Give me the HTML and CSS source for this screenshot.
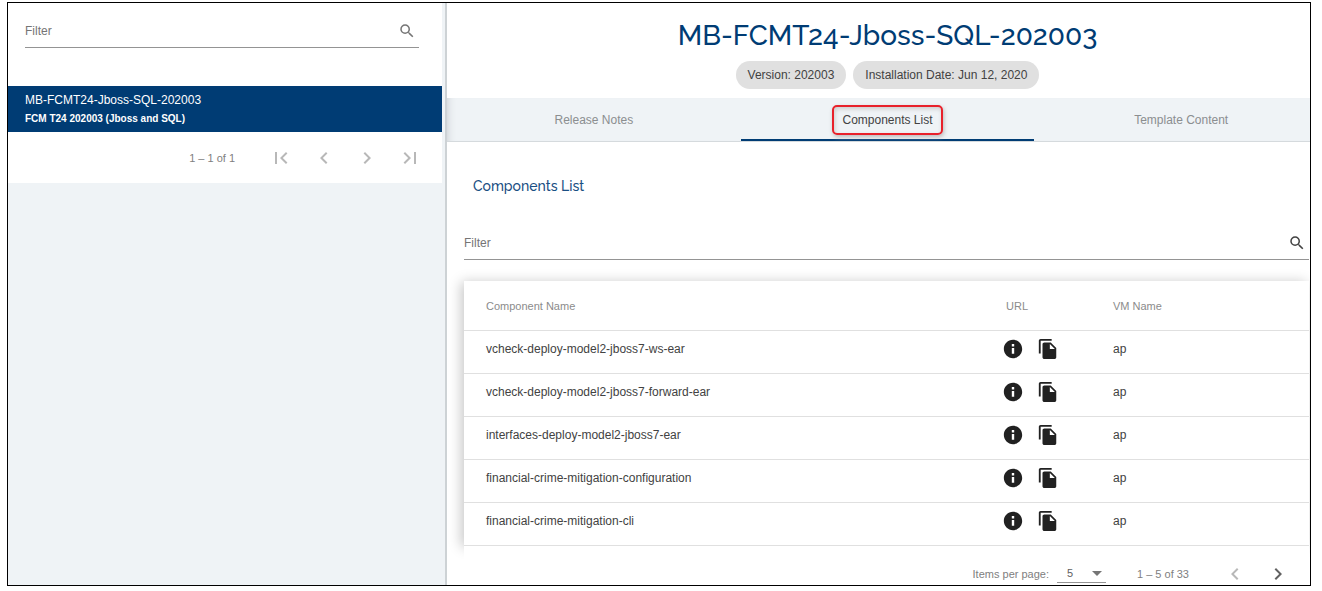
FILE: index.html
```html
<!DOCTYPE html>
<html lang="en">
<head>
<meta charset="utf-8">
<title>MB-FCMT24-Jboss-SQL-202003</title>
<link rel="stylesheet" href="styles.css">
</head>
<body>
<svg class="sprite" aria-hidden="true">
  <symbol id="search" viewBox="0 0 24 24"><path d="M15.5 14h-.79l-.28-.27A6.471 6.471 0 0 0 16 9.5 6.5 6.5 0 1 0 9.5 16c1.61 0 3.09-.59 4.23-1.57l.27.28v.79l5 4.99L20.49 19l-4.99-5zm-6 0C7.01 14 5 11.99 5 9.5S7.01 5 9.5 5 14 7.01 14 9.5 11.99 14 9.5 14z"/></symbol>
  <symbol id="first" viewBox="0 0 24 24"><path d="M18.41 16.59L13.82 12l4.59-4.59L17 6l-6 6 6 6zM6 6h2v12H6z"/></symbol>
  <symbol id="prev" viewBox="0 0 24 24"><path d="M15.41 7.41L14 6l-6 6 6 6 1.41-1.41L10.83 12z"/></symbol>
  <symbol id="next" viewBox="0 0 24 24"><path d="M10 6L8.59 7.41 13.17 12l-4.58 4.59L10 18l6-6z"/></symbol>
  <symbol id="last" viewBox="0 0 24 24"><path d="M5.59 7.41L10.18 12l-4.59 4.59L7 18l6-6-6-6zM16 6h2v12h-2z"/></symbol>
  <symbol id="info" viewBox="0 0 24 24"><path d="M12 2C6.48 2 2 6.48 2 12s4.48 10 10 10 10-4.480 10-10S17.520 2 12 2zm1.300 15.200h-2.600v-6.400h2.600v6.400zm0-8h-2.600V6.600h2.600v2.600z"/></symbol>
  <symbol id="copy" viewBox="0 0 24 24"><path d="M16 1H4c-1.100 0-2 .9-2 2v14h2V3h12V1zm-1 4l6 6v10c0 1.100-.9 2-2 2H7.990C6.890 23 6 22.100 6 21l.01-14c0-1.100.89-2 1.990-2h7zm-1 7h5.500L14 6.500V12z"/></symbol>
</svg>
<div class="frame">
  <aside class="sidebar">
    <div class="panel">
      <label class="filter filter-side">
        <input type="text" placeholder="Filter" aria-label="Filter">
        <svg class="icon-search"><use href="#search"/></svg>
      </label>
      <a class="item" href="#">
        <span class="item-name">MB-FCMT24-Jboss-SQL-202003</span>
        <span class="item-note">FCM T24 202003 (Jboss and SQL)</span>
      </a>
      <nav class="pager" aria-label="Templates pages">
        <span class="range">1 – 1 of 1</span>
        <button class="page-btn" disabled aria-label="First page"><svg><use href="#first"/></svg></button>
        <button class="page-btn" disabled aria-label="Previous page"><svg><use href="#prev"/></svg></button>
        <button class="page-btn" disabled aria-label="Next page"><svg><use href="#next"/></svg></button>
        <button class="page-btn" disabled aria-label="Last page"><svg><use href="#last"/></svg></button>
      </nav>
    </div>
  </aside>
  <main class="main">
    <header class="header">
      <h1>MB-FCMT24-Jboss-SQL-202003</h1>
      <div class="chips">
        <span class="chip">Version: 202003</span>
        <span class="chip">Installation Date: Jun 12, 2020</span>
      </div>
    </header>
    <div class="tabs" role="tablist">
      <button class="tab" role="tab" aria-selected="false">Release Notes</button>
      <button class="tab active" role="tab" aria-selected="true"><span class="mark">Components List</span></button>
      <button class="tab" role="tab" aria-selected="false">Template Content</button>
    </div>
    <section class="content">
      <h2>Components List</h2>
      <label class="filter">
        <input type="text" placeholder="Filter" aria-label="Filter">
        <svg class="icon-search dark"><use href="#search"/></svg>
      </label>
      <div class="card">
        <table>
          <colgroup><col><col class="col-url"><col class="col-vm"></colgroup>
          <thead><tr><th>Component Name</th><th>URL</th><th>VM Name</th></tr></thead>
          <tbody>
            <tr><td>vcheck-deploy-model2-jboss7-ws-ear</td><td><div class="actions"><button aria-label="Info"><svg><use href="#info"/></svg></button><button aria-label="Copy"><svg><use href="#copy"/></svg></button></div></td><td>ap</td></tr>
            <tr><td>vcheck-deploy-model2-jboss7-forward-ear</td><td><div class="actions"><button aria-label="Info"><svg><use href="#info"/></svg></button><button aria-label="Copy"><svg><use href="#copy"/></svg></button></div></td><td>ap</td></tr>
            <tr><td>interfaces-deploy-model2-jboss7-ear</td><td><div class="actions"><button aria-label="Info"><svg><use href="#info"/></svg></button><button aria-label="Copy"><svg><use href="#copy"/></svg></button></div></td><td>ap</td></tr>
            <tr><td>financial-crime-mitigation-configuration</td><td><div class="actions"><button aria-label="Info"><svg><use href="#info"/></svg></button><button aria-label="Copy"><svg><use href="#copy"/></svg></button></div></td><td>ap</td></tr>
            <tr><td>financial-crime-mitigation-cli</td><td><div class="actions"><button aria-label="Info"><svg><use href="#info"/></svg></button><button aria-label="Copy"><svg><use href="#copy"/></svg></button></div></td><td>ap</td></tr>
          </tbody>
        </table>
      </div>
      <nav class="pager pager-main" aria-label="Components pages">
        <label class="per-page" for="size">Items per page:</label>
        <span class="select"><select id="size"><option>5</option><option>10</option></select></span>
        <span class="range">1 – 5 of 33</span>
        <button class="page-btn" disabled aria-label="Previous page"><svg><use href="#prev"/></svg></button>
        <button class="page-btn" aria-label="Next page"><svg><use href="#next"/></svg></button>
      </nav>
    </section>
  </main>
</div>
</body>
</html>
```
FILE: styles.css
```css
* { box-sizing: border-box; }
body {
  margin: 0;
  height: 100vh;
  padding: 2px 11px 5px 7px;
  background: #fff;
  color: #424242;
  font: 12px/16px "Liberation Sans", Arial, sans-serif;
}
button, input, select { font: inherit; color: inherit; border: 0; background: none; padding: 0; margin: 0; }
svg { display: block; fill: currentColor; }
.sprite { display: none; }
.frame {
  display: grid;
  grid-template-columns: 439fr 863fr;
  height: 100%;
  border: 1px solid #000;
  overflow: hidden;
}

/* Sidebar */
.sidebar {
  min-width: 0;
  padding-right: 3px;
  background: #eff3f6;
  border-right: 2px solid #cdd2d5;
}
.panel { background: #fff; }
.filter {
  display: flex;
  align-items: center;
  height: 34px;
  border-bottom: 1px solid #949494;
  color: #757575;
}
.filter input { flex: 1; min-width: 0; outline: 0; }
.filter input::placeholder { color: #757575; opacity: 1; }
.icon-search { width: 18px; height: 18px; margin-right: 3px; color: #757575; }
.icon-search.dark { color: #424242; }
.filter-side { margin: 0 23px 38px 17px; height: 45px; padding-top: 12px; }
.item {
  display: flex;
  flex-direction: column;
  gap: 4px;
  padding: 6px 17px;
  height: 46px;
  background: #003c74;
  color: #fff;
  text-decoration: none;
}
.item-name { font-size: 12px; line-height: 16px; }
.item-note { font-size: 10px; line-height: 14px; font-weight: bold; }
.pager {
  display: flex;
  align-items: center;
  justify-content: flex-end;
  height: 51px;
  padding-right: 20px;
  color: #808080;
  font-size: 11px;
}
.pager .range { margin-right: 24px; }
.page-btn { width: 24px; height: 24px; margin-left: 19px; color: #616161; }
.range + .page-btn { margin-left: 10px; }
.page-btn:disabled { color: #b8b8b8; }
.page-btn svg { width: 24px; height: 24px; }

/* Main */
.main { min-width: 0; }
.header, .tabs { margin-right: -18px; }
.header { display: flex; flex-direction: column; align-items: center; padding: 13px 0 9px; }
h1, h2 { margin: 0; font-family: Raleway, Lato, sans-serif; font-weight: 500; color: #003c74; font-variant-numeric: oldstyle-nums; }
h1 { font-size: 28px; line-height: 40px; margin-bottom: 5px; }
.chips { display: flex; gap: 7px; }
.chip {
  padding: 6px 12px;
  border-radius: 14px;
  background: #e0e0e0;
}
.tabs {
  display: grid;
  grid-template-columns: repeat(3, 1fr);
  height: 44px;
  background: #eff3f6;
  border-bottom: 1px solid #d5dadd;
  box-shadow: inset 8px 0 8px -8px #c4c9cc;
}
.tab { display: flex; align-items: center; justify-content: center; padding-top: 2px; color: #8b8e90; border-bottom: 2px solid transparent; }
.tab.active { color: #424242; border-bottom-color: #003c74; }
.mark {
  padding: 5px 8px;
  border: 2px solid #e8212b;
  border-radius: 5px;
  box-shadow: 1px 2px 4px #bbb, inset 1px 2px 4px #ccc;
}
.content { padding: 34px 1px 0 17px; }
h2 { font-size: 14px; line-height: 20px; padding-left: 9px; margin-bottom: 30px; color: #1a4f83; }
.card { position: relative; margin-top: 21px; background: #fff; box-shadow: -3px 1px 12px rgba(0, 0, 0, .22); }
table { width: 100%; table-layout: fixed; border-collapse: separate; border-spacing: 0; }
.col-url { width: 107px; }
.col-vm { width: 218px; }
th, td { padding: 0 0 0 22px; text-align: left; border-bottom: 1px solid #e0e0e0; }
th { height: 50px; font-size: 11px; font-weight: 400; color: #8b8b8b; }
td { height: 43px; padding-bottom: 6px; }
.actions { display: flex; gap: 13px; margin-left: -4px; }
.actions button { width: 22px; height: 22px; color: #212121; }
.actions svg { width: 22px; height: 22px; }
.pager-main { position: relative; height: 56px; padding-right: 19px; background: #fff; }
.per-page { margin-right: 8px; }
.select {
  position: relative;
  width: 49px;
  margin-right: 31px;
  margin-bottom: 2px;
  border-bottom: 1px solid #949494;
}
.select select { display: block; appearance: none; width: 100%; height: 18px; padding-left: 10px; color: #616161; }
.select::after {
  content: "";
  position: absolute;
  right: 4px;
  top: 7px;
  border: 5px solid transparent;
  border-top-color: #757575;
  border-bottom: 0;
  pointer-events: none;
}
```
